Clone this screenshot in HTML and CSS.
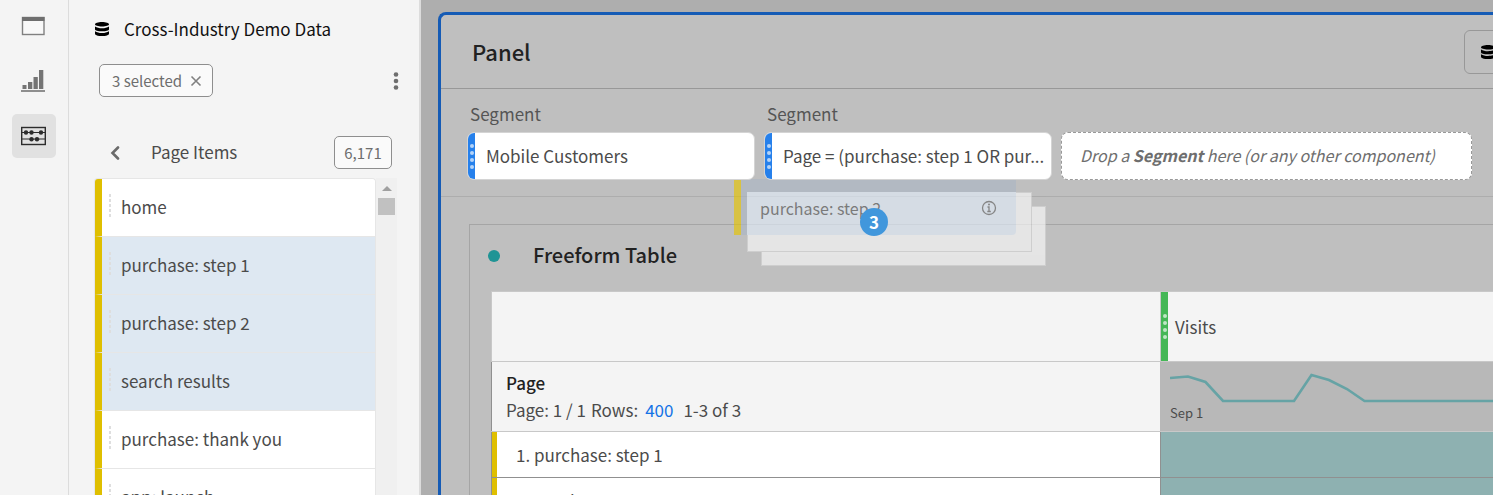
FILE: index.html
```html
<!DOCTYPE html>
<html lang="en">
<head>
<meta charset="utf-8">
<title>Workspace</title>
<link rel="stylesheet" href="styles.css">
</head>
<body>
<div class="app">
  <nav class="rail" aria-label="Workspace sections">
    <button class="rail-btn" aria-label="Panels">
      <svg width="26" height="22" viewBox="0 0 26 22"><rect x="1.500" y="2.500" width="21.500" height="17" fill="#f8f8f8" stroke="#808080" stroke-width="1.400"/><path d="M1 2h22.500v4H1z" fill="#6e6e6e"/></svg>
    </button>
    <button class="rail-btn" aria-label="Visualizations">
      <svg width="26" height="24" viewBox="0 0 26 24"><path d="M1.500 16h4v4h-4zM7 13h4.300v7H7zM12.500 8h4.300v12h-4.300zM18 1h4.300v19H18z" fill="#747474"/><path d="M0 21h24v2H0z" fill="#8e8e8e"/></svg>
    </button>
    <button class="rail-btn rail-btn-active" aria-label="Components" aria-pressed="true">
      <svg width="26" height="20" viewBox="0 0 26 20"><rect x=".7" y="1.500" width="23.600" height="17" fill="none" stroke="#2c2c2c" stroke-width="1.400"/><path d="M0 6.500h24M0 13h24" stroke="#2c2c2c" stroke-width="1.200"/><g fill="#2c2c2c"><circle cx="5" cy="6.500" r="2.200"/><circle cx="10.500" cy="6.500" r="2.200"/><circle cx="20" cy="6.500" r="2.200"/><circle cx="10.500" cy="13.200" r="2.200"/><circle cx="16" cy="13.200" r="2.200"/></g></svg>
    </button>
  </nav>

  <aside class="side">
    <header class="suite">
      <svg class="db" viewBox="0 0 14 14"><path d="M0 2.300C0 1 3 0 7 0s7 1 7 2.300S11 4.500 7 4.500 0 3.600 0 2.300z"/><path d="M0 4.500c2 1.400 4 1.700 7 1.700s5-.3 7-1.700v2.700C14 8.500 11 9.300 7 9.300S0 8.500 0 7.200z"/><path d="M0 9.200c2 1.400 4 1.700 7 1.700s5-.3 7-1.700v2.500c0 1.400-3 2.300-7 2.300s-7-.9-7-2.300z"/></svg>
      <h1 class="suite-name">Cross-Industry Demo Data</h1>
    </header>
    <div class="filters">
      <button class="chip">3 selected
        <svg width="12" height="12" viewBox="0 0 12 12"><path d="M1.500 1.500l9 9M10.500 1.500l-9 9" stroke="#808080" stroke-width="1.600"/></svg>
      </button>
      <button class="more" aria-label="More">
        <svg width="6" height="18" viewBox="0 0 6 18" fill="#6e6e6e"><circle cx="3" cy="2.500" r="2.300"/><circle cx="3" cy="9" r="2.300"/><circle cx="3" cy="15.500" r="2.300"/></svg>
      </button>
    </div>
    <div class="list-head">
      <button class="back" aria-label="Back">
        <svg width="10" height="14" viewBox="0 0 10 14"><path d="M8 1.500L2.500 7 8 12.500" fill="none" stroke="#6a6a6a" stroke-width="2.600" stroke-linecap="round"/></svg>
      </button>
      <h2 class="list-title">Page Items</h2>
      <button class="chip count">6,171</button>
    </div>
    <div class="list-wrap">
      <ul class="items">
        <li class="item"><span class="grip"></span>home</li>
        <li class="item item-on"><span class="grip"></span>purchase: step 1</li>
        <li class="item item-on"><span class="grip"></span>purchase: step 2</li>
        <li class="item item-on"><span class="grip"></span>search results</li>
        <li class="item"><span class="grip"></span>purchase: thank you</li>
        <li class="item"><span class="grip"></span>app: launch</li>
      </ul>
      <div class="scroll" aria-hidden="true"><span class="scroll-up"></span><span class="scroll-thumb"></span></div>
    </div>
  </aside>

  <main class="main">
    <section class="panel">
      <header class="panel-head">
        <h2 class="panel-title">Panel</h2>
        <button class="suite-btn" aria-label="Report suite">
          <svg class="db" viewBox="0 0 14 14"><path d="M0 2.300C0 1 3 0 7 0s7 1 7 2.300S11 4.500 7 4.500 0 3.600 0 2.300z"/><path d="M0 4.500c2 1.400 4 1.700 7 1.700s5-.3 7-1.700v2.700C14 8.500 11 9.300 7 9.300S0 8.500 0 7.200z"/><path d="M0 9.200c2 1.400 4 1.700 7 1.700s5-.3 7-1.700v2.500c0 1.400-3 2.300-7 2.300s-7-.9-7-2.300z"/></svg>
        </button>
      </header>
      <div class="segments">
        <div class="seg-col">
          <span class="seg-label">Segment</span>
          <div class="seg"><span class="handle"><i></i><i></i><i></i><i></i></span><span class="seg-text">Mobile Customers</span></div>
        </div>
        <div class="seg-col">
          <span class="seg-label">Segment</span>
          <div class="seg"><span class="handle"><i></i><i></i><i></i><i></i></span><span class="seg-text">Page = (purchase: step 1 OR pur...</span></div>
        </div>
        <div class="drop">Drop a <b>Segment</b> here (or any other component)</div>
        <div class="ghost">
          <div class="ghost-stack">
            <div class="sheet sheet-back"></div>
            <div class="sheet sheet-front"></div>
            <div class="ghost-card">
              <span>purchase: step 2</span>
              <svg width="16" height="16" viewBox="0 0 16 16"><circle cx="8" cy="8" r="6.500" fill="none" stroke="#666" stroke-width="1.300"/><path d="M6.500 7H8v4.500M6.300 11.500h3.500" fill="none" stroke="#666" stroke-width="1.300"/><circle cx="8" cy="4.500" r="1" fill="#666"/></svg>
            </div>
          </div>
          <span class="badge">3</span>
        </div>
      </div>
      <section class="freeform">
        <header class="freeform-head"><span class="dot"></span><h3 class="freeform-title">Freeform Table</h3></header>
        <table class="table">
          <thead>
            <tr class="row-head">
              <th class="col-dim"></th>
              <th class="metric"><div class="metric-in"><span class="handle handle-green"><i></i><i></i><i></i><i></i></span>Visits</div></th>
            </tr>
            <tr class="row-sub">
              <th class="dim">
                <div class="dim-name">Page</div>
                <div class="dim-info"><span>Page: 1 / 1</span><span>Rows:</span><a href="#rows">400</a><span>1-3 of 3</span></div>
              </th>
              <td class="spark">
                <svg width="332" height="32" viewBox="0 0 332 32"><path d="M0 6l18-1.500L35.500 10 53 29h71l17.500-26L159 8l18 9 17.500 12H332" fill="none" stroke="#66a3a5" stroke-width="2.600"/></svg>
                <div class="spark-date">Sep 1</div>
              </td>
            </tr>
          </thead>
          <tbody>
            <tr class="row"><td class="name"><span class="num">1.</span>purchase: step 1</td><td class="heat"></td></tr>
            <tr class="row"><td class="name"><span class="num">2.</span>purchase: step 2</td><td class="heat"></td></tr>
          </tbody>
        </table>
      </section>
    </section>
  </main>
</div>
</body>
</html>
```
FILE: styles.css
```css
* { box-sizing: border-box; }
body { margin: 0; font: 17px/24px "Noto Sans CJK SC", "Noto Sans", sans-serif; color: #4b4b4b; }
button { font: inherit; color: inherit; background: none; border: 0; padding: 0; }
h1, h2, h3, ul { margin: 0; padding: 0; font-weight: 400; }
svg { display: block; flex: none; }

.app { display: flex; height: 100vh; overflow: hidden; background: #f4f4f4; }

.rail { flex: none; width: 69px; padding: 4px 0 0 12px; border-right: 1px solid #dcdcdc; display: flex; flex-direction: column; gap: 11px; }
.rail-btn { width: 44px; height: 44px; display: flex; align-items: center; justify-content: center; border-radius: 5px; }
.rail-btn-active { background: #e1e1e1; }

.side { flex: none; width: 352px; border-right: 2px solid #dcdcdc; display: flex; flex-direction: column; }
.db { width: 14px; height: 14px; fill: #000; }
.suite { display: flex; align-items: center; gap: 15px; padding: 17px 0 0 26px; }
.suite-name { font-size: 17px; line-height: 24px; color: #111; }
.filters { display: flex; align-items: center; justify-content: space-between; padding: 23px 20px 0 30px; }
.chip { display: flex; align-items: center; gap: 8px; height: 33px; padding: 0 10px 0 12px; border: 1px solid #8e8e8e; border-radius: 5px; background: #fafafa; color: #6e6e6e; font-size: 15px; }
.list-head { display: flex; align-items: center; padding: 39px 27px 0 41px; }
.back { width: 10px; }
.list-title { flex: 1; padding: 0 0 2px 31px; font-size: 17px; }
.count { justify-content: center; width: 58px; padding: 0; }
.list-wrap { display: flex; flex: 1; min-height: 0; margin: 9px 22px 0 25px; }
.items { flex: 1; list-style: none; border: 1px solid #e6e6e6; border-bottom: 0; border-radius: 4px 4px 0 0; overflow: hidden; }
.item { display: flex; align-items: center; height: 58px; padding-bottom: 2px; border-left: 7px solid #dfbf00; border-bottom: 1px solid #e6e6e6; background: #fff; background-clip: padding-box; }
.item-on { background-color: #dee8f2; }
.grip { width: 2px; height: 25px; margin: 0 10px 0 7px; background: repeating-linear-gradient(#dedede 0 3px, transparent 3px 5px); }
.scroll { width: 21px; background: #f0f0f0; display: flex; flex-direction: column; align-items: center; padding-top: 8px; gap: 7px; }
.scroll-up { border: 5px solid transparent; border-top: 0; border-bottom-color: #a0a0a0; }
.scroll-thumb { width: 17px; height: 17px; background: #c1c1c1; }

.main { flex: 1; min-width: 0; padding: 12px 0 0 17px; background: #aeaeae; overflow: hidden; }
.panel { height: 100%; border: 3px solid #155bb5; border-width: 3px 0 0 3px; border-radius: 8px 0 0 0; background: #bfbfbf; overflow: hidden; }
.panel-head { display: flex; align-items: center; justify-content: space-between; height: 74px; padding-left: 31px; border-bottom: 1px solid #989898; }
.panel-title { padding-bottom: 2px; font-size: 22px; font-weight: 500; color: #222; }
.suite-btn { flex: none; width: 60px; height: 44px; margin-right: -31px; padding-left: 16px; border: 1px solid #989898; border-radius: 6px; }

.segments { position: relative; display: flex; align-items: flex-end; gap: 9px; padding: 13px 21px 16px 26px; border-bottom: 1px solid #adadad; }
.seg-col { flex: 0 1 288px; min-width: 0; }
.seg-label { display: block; padding: 0 3px 6px; color: #555; }
.seg { position: relative; z-index: 2; display: flex; height: 48px; border: 1px solid #d4d4d4; border-radius: 7px; background: #fff; overflow: hidden; }
.handle { flex: none; display: flex; flex-direction: column; align-items: center; justify-content: center; gap: 3px; width: 7px; background: #2680eb; }
.handle i { width: 4px; height: 4px; border-radius: 50%; background: #b4d3f8; }
.seg-text { padding: 0 2px 0 11px; line-height: 45px; white-space: nowrap; overflow: hidden; }
.drop { flex: 1; position: relative; z-index: 2; height: 48px; padding-left: 18px; border: 1px dashed #999; border-radius: 7px; background: #fff; font-size: 16px; line-height: 45px; font-style: italic; color: #6e6e6e; white-space: nowrap; overflow: hidden; }

.ghost { position: absolute; z-index: 1; left: 293px; top: 90px; width: 312px; height: 86px; }
.ghost-stack { opacity: .65; }
.sheet { position: absolute; width: 285px; height: 60px; border: 1px solid #d6d6d6; background: #f9f9f9; }
.sheet-back { left: 27px; top: 27px; }
.sheet-front { left: 13px; top: 13px; }
.ghost-card { position: absolute; left: 7px; top: 0; display: flex; align-items: center; justify-content: space-between; width: 275px; height: 56px; padding: 0 19px 12px 13px; border-top: 13px solid #abb6c4; border-left: 6px solid #abb6c4; background: #e1ecf8; box-shadow: -7px 0 #e5c400; border-radius: 0 0 4px 0; color: #555; font-size: 16px; }
.badge { position: absolute; left: 126px; top: 29px; width: 28px; height: 28px; border-radius: 50%; background: #4197dc; color: #fff; font-size: 17px; line-height: 28px; font-weight: 700; text-align: center; }

.freeform { margin: 27px 0 0 28px; padding-left: 21px; border-top: 1px solid #a5a5a5; border-left: 1px solid #a5a5a5; }
.freeform-head { display: flex; align-items: center; gap: 33px; height: 66px; padding: 0 0 4px; margin-left: -3px; }
.dot { width: 12px; height: 12px; border-radius: 50%; background: #1f9495; }
.freeform-title { padding-bottom: 2px; font-size: 20px; font-weight: 500; color: #222; }
.table { width: 100%; table-layout: fixed; border-collapse: collapse; background: #f4f4f4; }
.table th, .table td { padding: 0; border: 1px solid #c8c8c8; border-right: 0; font-weight: 400; text-align: left; }
.table .col-dim { width: 669px; }
.row-head { height: 70px; }
.metric-in { display: flex; align-items: center; gap: 7px; height: 69px; }
.handle-green { height: 69px; background: #45b756; }
.handle-green i { background: #bfe6c5; }
.row-sub { height: 70px; }
.table .dim { padding: 0 0 2px 14px; line-height: 27px; border-left-color: #909090; }
.dim-name { font-weight: 500; color: #222; }
.dim-info { display: flex; gap: 5px; }
.dim-info a { margin: 0 5px 0 2px; color: #1473e6; text-decoration: none; }
.table .spark { padding-left: 9px; border-left-color: #b8b8b8; background: #b8b8b8; overflow: hidden; }
.spark-date { font-size: 13px; line-height: 18px; }
.row { height: 46px; background: #fff; }
.table .row td { border-color: #909090; }
.table .name { padding: 0 0 0 24px; box-shadow: inset 5px 0 #dfbf00; }
.num { display: inline-block; width: 18px; }
.heat { background: #8eb1b1; }
```
